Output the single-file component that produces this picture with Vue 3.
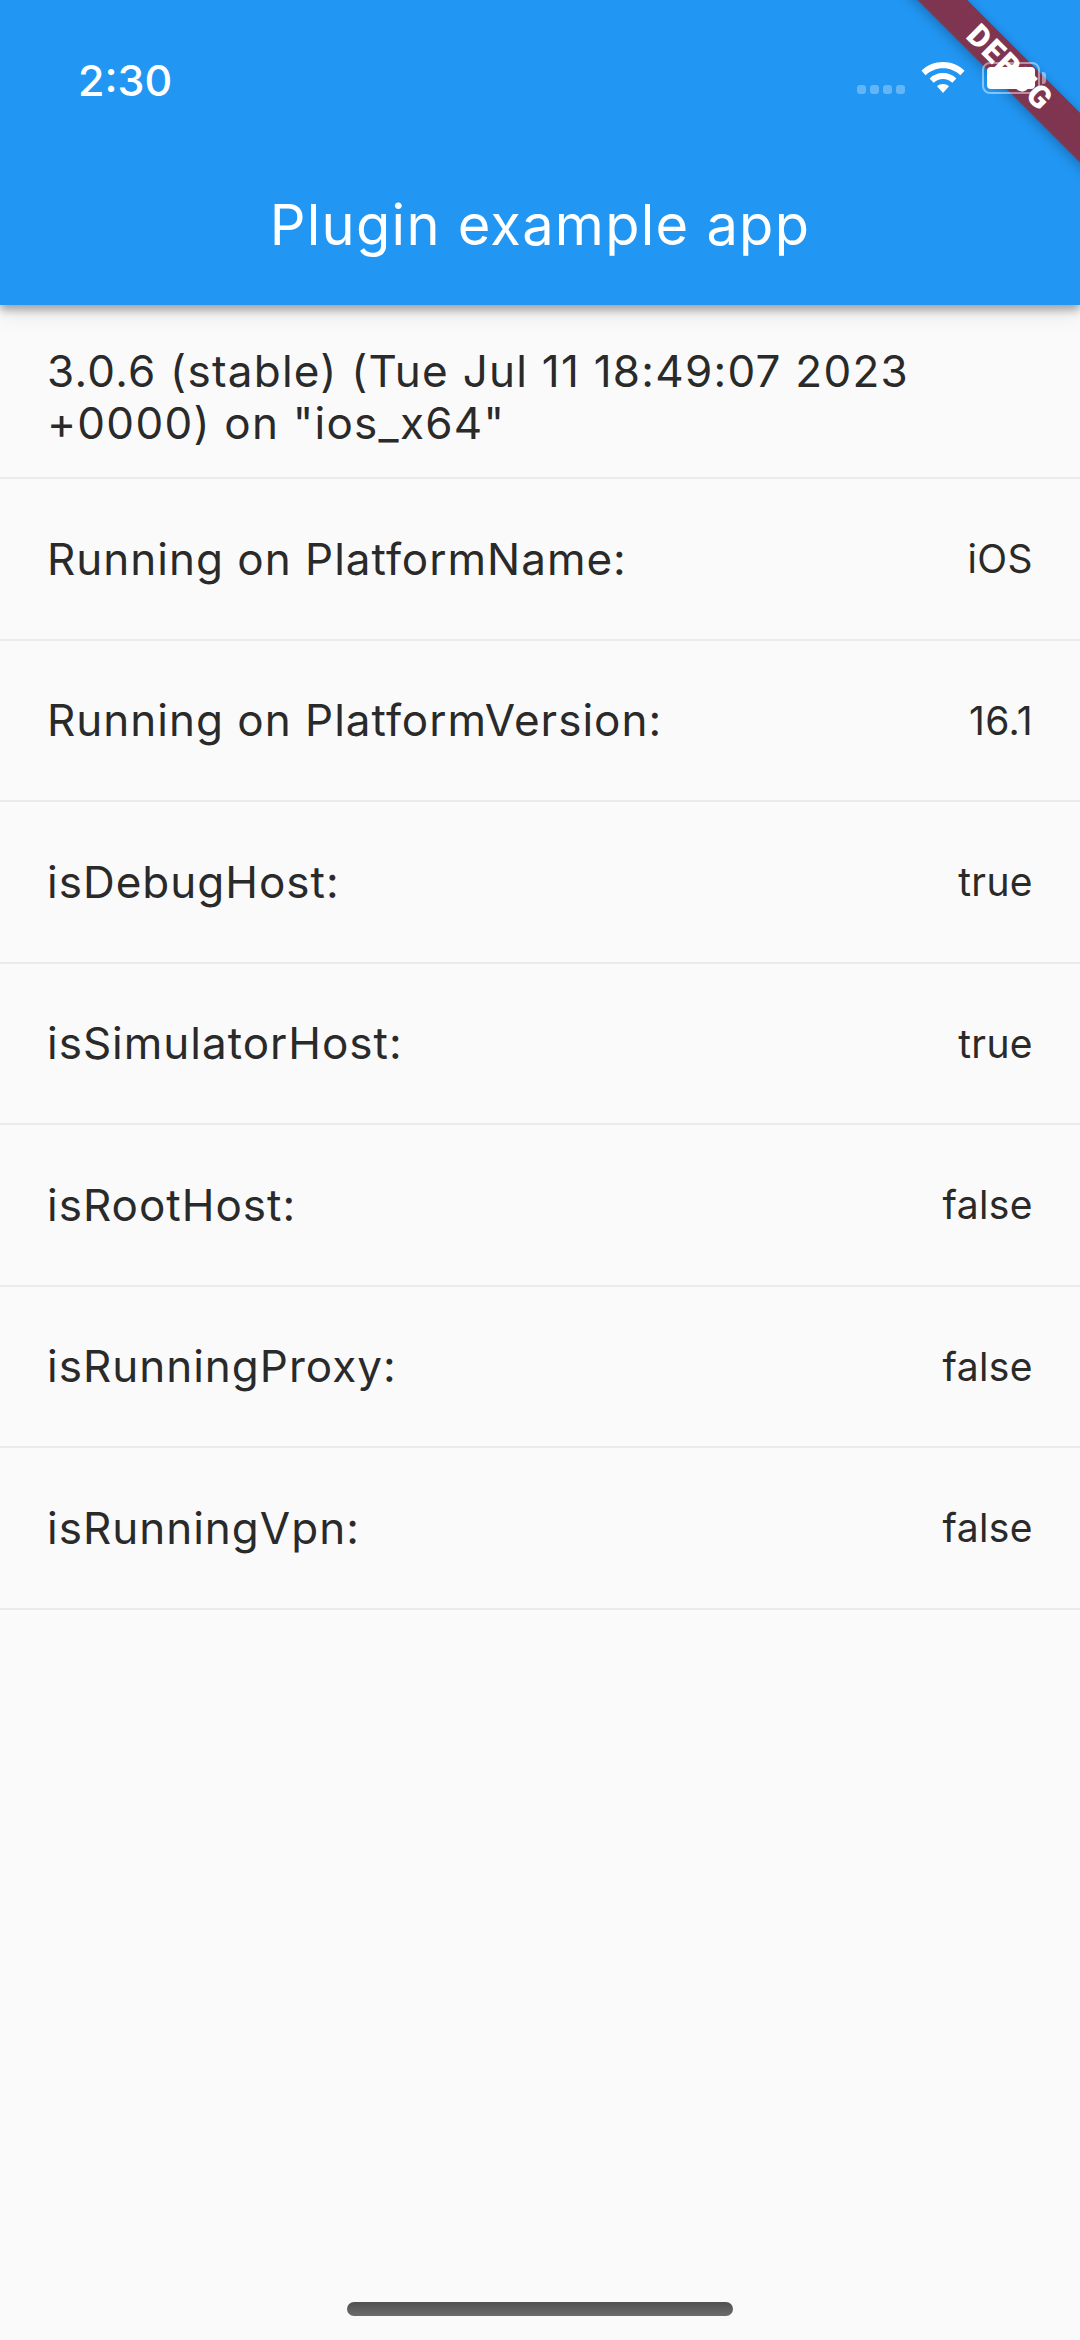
<script setup>
const rows = [
  ['Running on PlatformName:', 'iOS'],
  ['Running on PlatformVersion:', '16.1'],
  ['isDebugHost:', 'true'],
  ['isSimulatorHost:', 'true'],
  ['isRootHost:', 'false'],
  ['isRunningProxy:', 'false'],
  ['isRunningVpn:', 'false'],
]
</script>

<template>
  <div class="page">
    <header class="appbar">
      <div class="ribbon"><span>DEBUG</span></div>
      <div class="status">
        <span class="time">2:30</span>
        <div class="icons">
          <div class="dots"><i></i><i></i><i></i><i></i></div>
          <svg class="wifi" width="44" height="32" viewBox="0 0 44 32">
            <path fill="#fff" d="M22 0C13.6 0 6 3.300 0.500 8.700L4.600 13.200C9.100 8.900 15.200 6.200 22 6.200C28.800 6.200 34.900 8.900 39.400 13.200L43.500 8.700C38 3.300 30.400 0 22 0Z" />
            <path fill="#fff" d="M22 11C16.800 11 12.100 13 8.600 16.400L12.700 20.800C15.100 18.500 18.400 17.100 22 17.100C25.600 17.100 28.900 18.500 31.300 20.800L35.400 16.400C31.900 13 27.200 11 22 11Z" />
            <path fill="#fff" d="M22 22C19.700 22 17.600 22.900 16 24.300L22 31L28 24.300C26.400 22.900 24.300 22 22 22Z" />
          </svg>
          <div class="battery"><div class="fill"></div><div class="cap"></div></div>
        </div>
      </div>
      <h1 class="title">Plugin example app</h1>
    </header>
    <main class="list">
      <div class="head-row">3.0.6 (stable) (Tue Jul 11 18:49:07 2023<br />+0000) on "ios_x64"</div>
      <div v-for="r in rows" :key="r[0]" class="row">
        <span class="label">{{ r[0] }}</span>
        <span class="value">{{ r[1] }}</span>
      </div>
    </main>
    <div class="home"></div>
  </div>
</template>

<style>
html, body { margin: 0; background: #fafafa; }
</style>

<style scoped>
.page {
  position: relative;
  width: 1080px;
  height: 2340px;
  overflow: hidden;
  background: #fafafa;
  font-family: Inter, "Liberation Sans", sans-serif;
  color: #2a2a2a;
  display: flex;
  flex-direction: column;
}
.appbar {
  position: relative;
  z-index: 2;
  height: 305px;
  flex: none;
  background: #2196f3;
  color: #fff;
  box-shadow: 0 5px 8px rgba(0, 0, 0, .3), 0 10px 20px rgba(0, 0, 0, .08);
  overflow: visible;
}
.ribbon {
  position: absolute;
  top: 0;
  right: 0;
  width: 200px;
  height: 200px;
  overflow: hidden;
}
.ribbon span {
  position: absolute;
  left: -10px;
  top: 50px;
  width: 280px;
  height: 35px;
  line-height: 35px;
  text-align: center;
  transform: rotate(45deg);
  background: #7f344f;
  box-shadow: 0 3px 12px rgba(0, 0, 0, .25);
  color: #fff;
  font-weight: 900;
  font-size: 31px;
  letter-spacing: 1.5px;
  font-family: Roboto, sans-serif;
}
.status {
  position: relative;
  height: 191px;
  display: flex;
  align-items: flex-start;
  justify-content: space-between;
  padding: 0 40px 0 78px;
}
.time {
  margin-top: 54px;
  font-size: 43px;
  line-height: 52px;
  font-weight: 500;
}
.icons {
  display: flex;
  align-items: flex-start;
  margin-top: 62px;
}
.dots {
  display: flex;
  gap: 4px;
  margin-top: 23px;
  margin-right: 16px;
}
.dots i {
  width: 9px;
  height: 9px;
  border-radius: 3px;
  background: rgba(255, 255, 255, .3);
}
.wifi { margin-right: 17px; }
.battery {
  position: relative;
  width: 58px;
  height: 32px;
  box-sizing: border-box;
  border: 2px solid rgba(255, 255, 255, .45);
  border-radius: 8px;
  padding: 3px;
}
.fill { width: 48px; height: 22px; background: #fff; border-radius: 4px; }
.cap {
  position: absolute;
  right: -8px;
  top: 8px;
  width: 4px;
  height: 12px;
  border-radius: 0 3px 3px 0;
  background: rgba(255, 255, 255, .45);
}
.title {
  margin: 0;
  text-align: center;
  font-size: 56px;
  line-height: 68px;
  font-weight: 400;
  letter-spacing: 1.25px;
}
.list { flex: none; }
.head-row {
  height: 174px;
  box-sizing: border-box;
  border-bottom: 2px solid #ebebeb;
  padding: 40px 47px 0;
  font-size: 44px;
  line-height: 52px;
  letter-spacing: 1.25px;
  font-weight: 400;
}
.row {
  height: 161.5px;
  box-sizing: border-box;
  border-bottom: 2px solid #ebebeb;
  padding: 0 47px;
  display: flex;
  align-items: center;
  justify-content: space-between;
}
.label { font-size: 44px; letter-spacing: 1px; font-weight: 400; }
.value { font-size: 39px; letter-spacing: .4px; font-weight: 400; }
.home {
  position: absolute;
  left: 347px;
  top: 2302px;
  width: 386px;
  height: 14px;
  border-radius: 7px;
  background: linear-gradient(#505050, #6c6c6c);
}
</style>
